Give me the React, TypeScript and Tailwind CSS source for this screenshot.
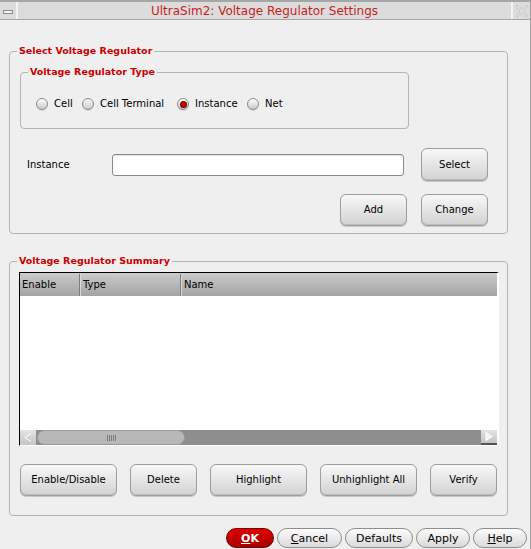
import type { ReactNode } from "react"

function Legend({ children }: { children: ReactNode }) {
  return <legend className="ml-[7px] px-[2px] text-[9.5px] font-bold leading-[14px] text-[#cc0000]">{children}</legend>
}

function Btn({ children, className = "" }: { children: ReactNode; className?: string }) {
  return (
    <div className={`flex items-center justify-center rounded-[6px] border border-[#9e9e9e] bg-linear-to-b from-[#f8f8f8] to-[#d2d2d2] shadow-[inset_0_-1px_0_#bdbdbd,0_1px_0_#c8c8c8] ${className}`}>
      {children}
    </div>
  )
}

function Pill({ children, className = "" }: { children: ReactNode; className?: string }) {
  return (
    <div className={`flex h-[20px] items-center justify-center rounded-full border border-[#8e8e8e] bg-linear-to-b from-[#fcfcfc] to-[#dadada] text-[11px] ${className}`}>
      {children}
    </div>
  )
}

function Radio({ label, checked, className = "" }: { label: string; checked?: boolean; className?: string }) {
  return (
    <div className={`flex items-center ${className}`}>
      <span className="relative h-[12px] w-[12px] rounded-full border border-[#8c8c8c] bg-linear-to-b from-[#ffffff] to-[#c9c9c9] shadow-[0_1px_0_#d8d8d8]">
        {checked && <span className="absolute left-[2.5px] top-[2.5px] h-[5px] w-[5px] rounded-full bg-[#c00000] shadow-[0_0_0_1px_#7a0000]" />}
      </span>
      <span className="ml-[6px] leading-[12px]">{label}</span>
    </div>
  )
}

function TitleBar() {
  return (
    <div className="flex h-[20px] border-t-2 border-b border-[#a6a6a6] bg-[#dcdcdc]">
      <div className="flex w-[16px] items-center justify-center">
        <span className="mt-[3px] h-[4px] w-[10px] border border-[#8a8a8a] bg-[#f2f2f2]" />
      </div>
      <div className="w-[2px] bg-[#f4f4f4]" />
      <div className="flex flex-1 items-center justify-center text-[12px] text-[#c81e1e]">UltraSim2: Voltage Regulator Settings</div>
      <div className="w-[2px] bg-[#f4f4f4]" />
      <div className="flex w-[17px] items-center justify-center">
        <svg width="14" height="14" viewBox="0 0 14 14">
          <path d="M2 1 L7 5 L12 1 L13 2 L9 7 L13 12 L12 13 L7 9 L2 13 L1 12 L5 7 L1 2 Z" fill="none" stroke="#bcbcbc" strokeWidth="1" strokeDasharray="1 1" />
        </svg>
      </div>
    </div>
  )
}

export default function App() {
  return (
    <div className="h-[549px] w-[531px] overflow-hidden border-r border-[#a0a0a0] bg-[#efefef] font-['DejaVu_Sans',sans-serif] text-[10px] leading-none text-black">
      <TitleBar />

      <fieldset className="ml-[9px] mt-[24px] h-[190px] w-[499px] rounded-[4px] border border-[#b4b4b4]">
        <Legend>Select Voltage Regulator</Legend>
        <fieldset className="ml-[10px] mt-[7px] h-[64px] w-[389px] rounded-[4px] border border-[#b4b4b4]">
          <Legend>Voltage Regulator Type</Legend>
          <div className="mt-[19px] flex pl-[15px]">
            <Radio label="Cell" className="w-[46px]" />
            <Radio label="Cell Terminal" className="w-[95px]" />
            <Radio label="Instance" checked className="w-[70px]" />
            <Radio label="Net" />
          </div>
        </fieldset>

        <div className="mt-[19px] flex h-[33px] items-center pl-[17px]">
          <span className="w-[85px]">Instance</span>
          <input className="h-[22px] w-[292px] rounded-[3px] border border-[#8a8a8a] bg-white shadow-[inset_0_1px_1px_rgba(0,0,0,0.12)] outline-none" />
          <Btn className="ml-[17px] h-[33px] w-[67px]">Select</Btn>
        </div>
        <div className="mt-[13px] flex justify-end gap-[14px] pr-[19px]">
          <Btn className="h-[32px] w-[67px]">Add</Btn>
          <Btn className="h-[32px] w-[67px]">Change</Btn>
        </div>
      </fieldset>

      <fieldset className="ml-[9px] mt-[20px] h-[262px] w-[499px] rounded-[4px] border border-[#b4b4b4]">
        <Legend>Voltage Regulator Summary</Legend>
        <div className="ml-[9px] mt-[4px] flex h-[174px] w-[480px] flex-col border-t border-l border-b border-r-2 border-t-black border-l-black border-b-white border-r-white">
          <div className="flex h-[23px] bg-linear-to-b from-[#cbcbcb] to-[#a4a4a4] pt-[1px]">
            <div className="flex w-[60px] items-center border-r border-[#7c7c7c] pl-[2px]">Enable</div>
            <div className="flex w-[101px] items-center border-r border-l border-r-[#7c7c7c] border-l-[#d8d8d8] pl-[2px]">Type</div>
            <div className="flex flex-1 items-center border-l border-[#d8d8d8] pl-[2px]">Name</div>
          </div>
          <div className="flex-1 bg-white" />
          <div className="flex h-[15px] bg-[#8e8e8e]">
            <div className="flex w-[16px] items-center justify-center bg-linear-to-b from-[#e4e4e4] to-[#c4c4c4]">
              <svg width="8" height="9" viewBox="0 0 8 9"><path d="M7 0.5 L0.8 4.5 L7 8.5" fill="none" stroke="#ffffff" strokeWidth="1" /></svg>
            </div>
            <div className="ml-[1px] flex w-[148px] items-center justify-center rounded-full border border-[#9a9a9a] bg-[#b8b8b8]">
              <div className="flex gap-[1px]">
                <span className="h-[6px] w-[1px] bg-[#7a7a7a]" />
                <span className="h-[6px] w-[1px] bg-[#7a7a7a]" />
                <span className="h-[6px] w-[1px] bg-[#7a7a7a]" />
                <span className="h-[6px] w-[1px] bg-[#7a7a7a]" />
                <span className="h-[6px] w-[1px] bg-[#7a7a7a]" />
              </div>
            </div>
            <div className="flex-1" />
            <div className="flex w-[16px] items-center justify-center border-b-2 border-[#555555] bg-linear-to-b from-[#e4e4e4] to-[#c4c4c4]">
              <svg width="8" height="9" viewBox="0 0 8 9"><path d="M1 0.5 L7.2 4.5 L1 8.5 Z" fill="#f4f4f4" stroke="#ffffff" strokeWidth="1" /></svg>
            </div>
          </div>
        </div>

        <div className="ml-[10px] mt-[18px] flex gap-[13px]">
          <Btn className="h-[32px] w-[97px]">Enable/Disable</Btn>
          <Btn className="h-[32px] w-[67px]">Delete</Btn>
          <Btn className="h-[32px] w-[97px]">Highlight</Btn>
          <Btn className="h-[32px] w-[97px]">Unhighlight All</Btn>
          <Btn className="h-[32px] w-[67px]">Verify</Btn>
        </div>
      </fieldset>

      <div className="ml-[226px] mt-[12px] flex gap-[3px]">
        <div className="flex h-[20px] w-[48px] items-center justify-center rounded-full border border-[#7a0000] bg-linear-to-b from-[#e00000] to-[#a80000] text-[11px] font-bold text-white">
          <span className="underline">O</span>K
        </div>
        <Pill className="w-[65px]"><span className="underline">C</span>ancel</Pill>
        <Pill className="w-[68px]">Defaults</Pill>
        <Pill className="w-[54px]">Apply</Pill>
        <Pill className="w-[54px]"><span className="underline">H</span>elp</Pill>
      </div>
    </div>
  )
}
